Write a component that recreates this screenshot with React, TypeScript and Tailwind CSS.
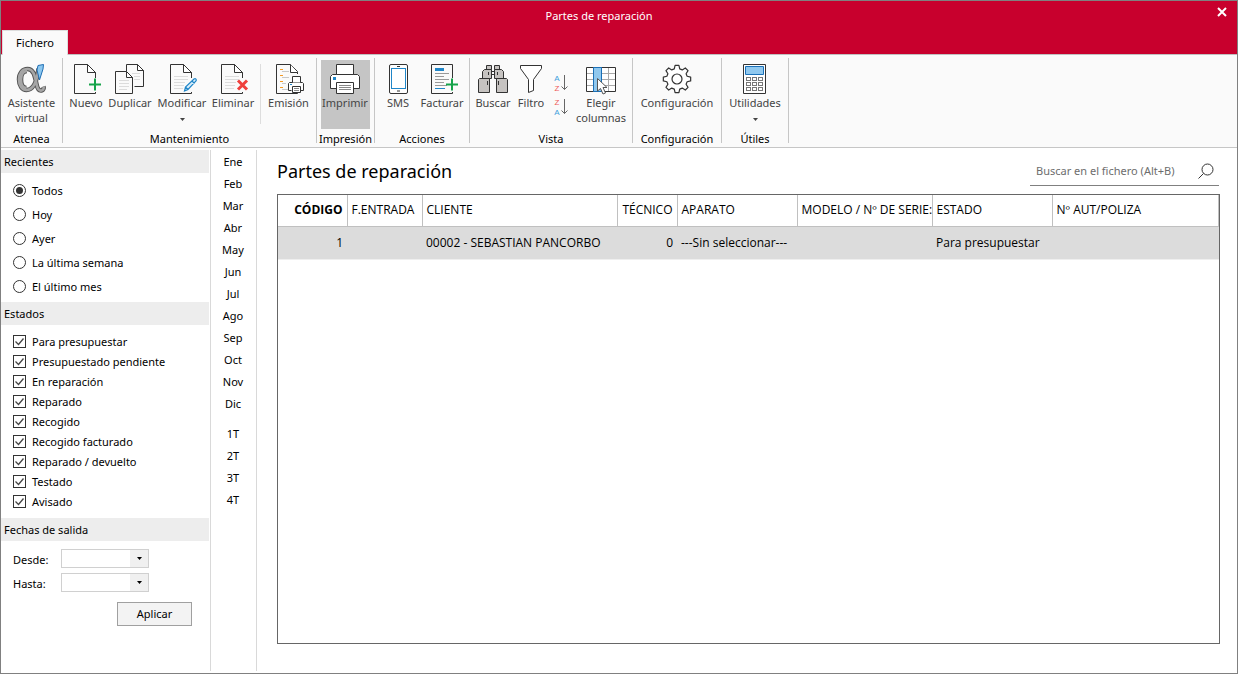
import { useState } from "react";
import type { ReactNode } from "react";

const RECENT = ["Todos", "Hoy", "Ayer", "La última semana", "El último mes"];

const STATES = [
  "Para presupuestar",
  "Presupuestado pendiente",
  "En reparación",
  "Reparado",
  "Recogido",
  "Recogido facturado",
  "Reparado / devuelto",
  "Testado",
  "Avisado",
];

const MONTHS = ["Ene", "Feb", "Mar", "Abr", "May", "Jun", "Jul", "Ago", "Sep", "Oct", "Nov", "Dic"];
const QUARTERS = ["1T", "2T", "3T", "4T"];

const COLUMNS = [
  { label: "CÓDIGO", className: "w-[69px] text-right font-bold" },
  { label: "F.ENTRADA", className: "w-[75px] text-left font-normal" },
  { label: "CLIENTE", className: "w-[195px] text-left font-normal" },
  { label: "TÉCNICO", className: "w-[60px] text-right font-normal" },
  { label: "APARATO", className: "w-[120px] text-left font-normal" },
  { label: "MODELO / Nº DE SERIE:", className: "w-[135px] text-left font-normal" },
  { label: "ESTADO", className: "w-[120px] text-left font-normal" },
  { label: "Nº AUT/POLIZA", className: "text-left font-normal" },
];

const ROWS = [
  ["1", "", "00002 - SEBASTIAN PANCORBO", "0", "---Sin seleccionar---", "", "Para presupuestar", ""],
];

function Icon({ children }: { children: ReactNode }) {
  return (
    <svg className="w-8 h-8 shrink-0" viewBox="0 0 32 32" fill="none" stroke="#333" aria-hidden="true">
      {children}
    </svg>
  );
}

function PageOutline() {
  return (
    <>
      <path d="M25.5 15V9.5L17.5 1.5H4.5V30.5H25.5V29" fill="none" />
      <path d="M17.5 1.5V9.5H25.5Z" fill="#fff" />
    </>
  );
}

function PageLines() {
  return <path stroke="#dcdcdc" d="M8 13.5H22M8 16.5H22M8 19.5H19M8 22.5H18M8 25.5H17" />;
}

function AlphaIcon() {
  const alpha =
    "M22.5 5.5C21 18 17 27 10.5 27C6 27 3 22.500 3 16.500C3 10 6.500 6 11.500 6C18 6 19 14 20.500 21C21.500 26 23 28 25.500 27.500C27.500 27 28 25 27.500 23.500";
  return (
    <Icon>
      <path d={alpha} stroke="#555" strokeWidth="4.500" />
      <path d="M5 16.500C5 11 7.500 8 11 8M5 16.500C5 22 7.500 25 10.500 25" stroke="#555" strokeWidth="4.500" />
      <path d={alpha} stroke="#a6a6a6" strokeWidth="2.600" />
      <path d="M5 16.500C5 11 7.500 8 11 8M5 16.500C5 22 7.500 25 10.500 25" stroke="#a6a6a6" strokeWidth="2.600" />
      <path d="M22 2.500L27.500 1.500L27 6L23.500 17L21 7Z" fill="#8cc8f0" stroke="#1f6eb4" />
    </Icon>
  );
}

function NewIcon() {
  return (
    <Icon>
      <PageOutline />
      <path d="M25 15.500V27.500M19 21.500H31" stroke="#16a34a" strokeWidth="2" />
    </Icon>
  );
}

function DuplicateIcon() {
  return (
    <Icon>
      <path d="M12.500 8V1.500H23.500L29.500 7.500V23.500H20.500" />
      <path d="M23.500 1.500V7.500H29.500Z" fill="#fff" />
      <path d="M18 10.500H26M20 13.500H26M20 16.500H26" stroke="#dcdcdc" />
      <path d="M1.500 8.500H12.500L18.500 14.500V30.500H1.500Z" />
      <path d="M12.500 8.500V14.500H18.500Z" fill="#fff" />
      <path d="M5 17.500H15M5 20.500H15M5 23.500H15M5 26.500H13" stroke="#dcdcdc" />
    </Icon>
  );
}

function EditIcon() {
  return (
    <Icon>
      <PageOutline />
      <PageLines />
      <path d="M18.500 28L19.500 24L28 16C29.500 15 31 16.500 30 18L22 26.500L18.500 28ZM19.500 24L22 26.500M26 18L28.500 20.500" fill="#d9effc" stroke="#2086c8" strokeWidth="1.200" />
    </Icon>
  );
}

function DeleteIcon() {
  return (
    <Icon>
      <PageOutline />
      <PageLines />
      <path d="M21 17.500L30 26.500M30 17.500L21 26.500" stroke="#ef3f3c" strokeWidth="3" />
    </Icon>
  );
}

function IssueIcon() {
  return (
    <Icon>
      <path d="M24.500 11V8.500L17.500 1.500H3.500V30.500H24.500V29" />
      <path d="M17.500 1.500V9.500H24.500" fill="#fff" />
      <path d="M7 6.500H10M7 12.500H10M7 18.500H10M7 24.500H10" stroke="#f59a23" />
      <path d="M9 8.500H16M9 14.500H16M9 20.500H13M9 26.500H15" stroke="#c8c8c8" />
      <path d="M18.500 27.500H15.500V20.500L16.500 19.500H29.500L30.500 20.500V27.500H27.500" fill="#fff" />
      <path d="M19.500 19.500V13.500H27.500V19.500" fill="#fff" />
      <path d="M19.500 23.500H27.500V29.500H19.500Z" fill="#fff" />
      <path d="M21 25.500H26M21 27.500H26" stroke="#888" />
      <path d="M17 21.500H19" stroke="#2086c8" />
    </Icon>
  );
}

function PrinterIcon() {
  return (
    <Icon>
      <path d="M1.500 25.500V13.500L3.500 11.500H28.500L30.500 13.500V25.500Z" fill="#fff" />
      <path d="M7.500 11.500V1.500H24.500V11.500Z" fill="#fff" />
      <path d="M7.500 19.500H24.500V30.500H7.500Z" fill="#fff" />
      <path d="M10 22.500H22M10 24.500H22M10 26.500H22" stroke="#888" />
      <path d="M4 14H7V17H4Z" fill="#2086c8" stroke="none" />
    </Icon>
  );
}

function PhoneIcon() {
  return (
    <Icon>
      <rect x="7.500" y="1.500" width="18" height="29" rx="1.500" fill="#fff" />
      <rect x="9.500" y="5.500" width="14" height="20" stroke="#2086c8" />
      <path d="M15 3.500H18M15 28H18" />
    </Icon>
  );
}

function InvoiceIcon() {
  return (
    <Icon>
      <path d="M26.500 15V1.500H5.500V30.500H26.500V29" />
      <path d="M9 5H18V8H9Z" fill="#2086c8" stroke="none" />
      <path d="M9 10.500H23M9 13.500H18M9 16.500H23M9 19.500H18M9 22.500H21" stroke="#999" />
      <path d="M9 25.500H19" stroke="#2086c8" />
      <path d="M26 15.500V27.500M20 21.500H32" stroke="#16a34a" strokeWidth="2" />
    </Icon>
  );
}

function BinocularsIcon() {
  return (
    <Icon>
      <g fill="#c6c3c1">
        <path d="M9.500 2.500H14.500V6.500H9.500ZM17.500 2.500H22.500V6.500H17.500Z" />
        <path d="M7.500 6.500H14.500V15.500H5.500V8.500ZM17.500 6.500H24.500L26.500 8.500V15.500H17.500Z" />
        <path d="M2.500 15.500H12.500V29.500H1.500V16.500ZM19.500 15.500H29.500L30.500 16.500V29.500H19.500Z" />
      </g>
      <path d="M14.500 8.500H17.500M14.500 11.500H17.500M11.500 9V12M20.500 9V12M10.500 18V22M21.500 18V22" />
    </Icon>
  );
}

function FunnelIcon() {
  return (
    <Icon>
      <path d="M5.500 2.500H26.500V5.500L18.500 16.500V27.500L13.500 29.500V16.500L5.500 5.500Z" fill="#fff" />
    </Icon>
  );
}

function SortIcon({ descending = false }: { descending?: boolean }) {
  const blue = { fill: "#3fa0dc", text: "A" };
  const red = { fill: "#ee5a5a", text: "Z" };
  const [top, bottom] = descending ? [red, blue] : [blue, red];
  return (
    <svg className="w-4 h-5" viewBox="0 0 16 20" fill="none" aria-hidden="true">
      <g fontFamily="Liberation Sans, sans-serif" fontSize="8" textAnchor="middle">
        <text x="4" y="8" fill={top.fill}>{top.text}</text>
        <text x="4" y="18" fill={bottom.fill}>{bottom.text}</text>
      </g>
      <path d="M11.500 2V16.500M8.500 13.500L11.500 16.500L14.500 13.500" stroke="#666" />
    </svg>
  );
}

function ColumnsIcon() {
  return (
    <Icon>
      <path d="M1.500 4.500H30.500V28.500H1.500Z" fill="#fff" />
      <path d="M2 10.500H30M2 16.500H30M2 22.500H30M23.500 5V28" stroke="#aaa" />
      <path d="M8.500 4.500H16.500V28.500H8.500Z" fill="#90c8ee" stroke="#1a70b8" />
      <path d="M12.500 15.500V28L15.500 25.500L18 31L20.500 30L18 24.500H22Z" fill="#fff" stroke="#555" />
    </Icon>
  );
}

// Eight trapezoid teeth around the centre of the 32px box
function gearPoints() {
  const points: string[] = [];
  for (let i = 0; i < 8; i++) {
    const corners = [[-15, 10.5], [-8, 13.8], [8, 13.8], [15, 10.5]];
    for (const [offset, radius] of corners) {
      const angle = ((i * 45 + offset) * Math.PI) / 180;
      points.push(`${16 + radius * Math.cos(angle)},${16 + radius * Math.sin(angle)}`);
    }
  }
  return points.join(" ");
}

function GearIcon() {
  return (
    <Icon>
      <polygon points={gearPoints()} fill="#fff" strokeWidth="1.200" strokeLinejoin="round" />
      <circle cx="16" cy="16" r="5" strokeWidth="1.200" />
    </Icon>
  );
}

function CalculatorIcon() {
  return (
    <Icon>
      <path d="M4.500 1.500H26.500V30.500H4.500Z" fill="#fff" />
      <path d="M6.500 3.500H24.500V11.500H6.500Z" fill="#90c8ee" stroke="#1a70b8" />
      {[14.5, 19.5, 24.5].map((y) =>
        [7.5, 13.5, 19.5].map((x) => <rect key={`${x}-${y}`} x={x} y={y} width="4" height="3" stroke="#777" />)
      )}
    </Icon>
  );
}

function Caret() {
  return (
    <svg className="w-[7px] h-1" viewBox="0 0 7 4" aria-hidden="true">
      <path d="M1 0H6L3.500 3Z" fill="currentColor" />
    </svg>
  );
}

type RibbonButtonProps = {
  icon: ReactNode;
  label: string;
  className: string;
  menu?: boolean;
};

function RibbonButton({ icon, label, className, menu }: RibbonButtonProps) {
  return (
    <button className={`flex flex-col items-center h-[69px] pt-[3px] text-[#444] hover:bg-gray-200 ${className}`}>
      {icon}
      <span className="leading-[15px]">{label}</span>
      {menu && <span className="pt-2"><Caret /></span>}
    </button>
  );
}

function RibbonGroup({ title, className, children }: { title: string; className: string; children: ReactNode }) {
  return (
    <section className={`flex flex-col justify-between shrink-0 border-r border-[#c6c6c6] ${className}`}>
      <div className="flex justify-center pt-0.5">{children}</div>
      <h2 className="text-center leading-4 -mb-1 whitespace-nowrap">{title}</h2>
    </section>
  );
}

function PanelTitle({ children }: { children: ReactNode }) {
  return <h2 className="h-[23px] pl-[3px] bg-[#ededed] leading-6">{children}</h2>;
}

function DateSelect({ id, label }: { id: string; label: string }) {
  return (
    <div className="flex items-center h-[19px]">
      <label htmlFor={id} className="w-12 pt-[3px]">{label}</label>
      <div className="relative">
        <select id={id} className="block appearance-none w-[88px] h-[19px] border border-[#d0d0d0] bg-white">
          <option value=""></option>
        </select>
        <span className="absolute right-px top-px bottom-px w-[18px] bg-[#f0f0f0] flex items-center justify-center pointer-events-none">
          <Caret />
        </span>
      </div>
    </div>
  );
}

function Sidebar() {
  const [recent, setRecent] = useState("Todos");
  return (
    <aside className="w-[210px] shrink-0 pr-px border-r border-[#d9d9d9]">
      <PanelTitle>Recientes</PanelTitle>
      <div className="pl-3 pt-1.5 pb-[3px]">
        {RECENT.map((item) => (
          <label key={item} className="flex items-center gap-1.5 h-6">
            <input
              type="radio"
              name="recent"
              checked={recent === item}
              onChange={() => setRecent(item)}
              className="appearance-none w-[13px] h-[13px] mb-px p-0.5 rounded-full border border-[#333] bg-clip-content checked:bg-[#333]"
            />
            {item}
          </label>
        ))}
      </div>
      <PanelTitle>Estados</PanelTitle>
      <div className="pl-3 pt-[7px] pb-1.5">
        {STATES.map((item) => (
          <label key={item} className="relative flex items-center gap-1.5 h-5">
            <input type="checkbox" defaultChecked className="peer appearance-none w-[13px] h-[13px] mb-px border border-[#333] bg-white" />
            <svg className="absolute left-0 w-[13px] h-[13px] mb-px opacity-0 peer-checked:opacity-100 pointer-events-none" viewBox="0 0 13 13" fill="none">
              <path d="M2.500 6.500L5.500 9.500L10.500 3.500" stroke="#444" strokeWidth="1.300" />
            </svg>
            {item}
          </label>
        ))}
      </div>
      <PanelTitle>Fechas de salida</PanelTitle>
      <div className="flex flex-col gap-[5px] pl-3 pt-2">
        <DateSelect id="desde" label="Desde:" />
        <DateSelect id="hasta" label="Hasta:" />
      </div>
      <div className="flex justify-end pr-[17px] pt-2.5">
        <button className="w-[75px] h-6 border border-[#a0a0a0] bg-[#f3f3f3] hover:bg-gray-200">Aplicar</button>
      </div>
    </aside>
  );
}

function Periods() {
  return (
    <nav className="w-[46px] shrink-0 flex flex-col pt-px pr-px border-r border-[#d9d9d9]">
      {MONTHS.map((month) => (
        <button key={month} className="h-[22px] hover:bg-gray-200">{month}</button>
      ))}
      <div className="flex flex-col pt-2">
        {QUARTERS.map((quarter) => (
          <button key={quarter} className="h-[22px] hover:bg-gray-200">{quarter}</button>
        ))}
      </div>
    </nav>
  );
}

function RepairTable() {
  return (
    <div className="flex-1 border border-[#666]">
      <table className="w-full table-fixed border-collapse text-xs font-['Open_Sans',sans-serif]">
        <thead>
          <tr className="h-[31px]">
            {COLUMNS.map((column) => (
              <th key={column.label} className={`px-1 border-r border-b border-[#c0c0c0] whitespace-nowrap ${column.className}`}>
                {column.label}
              </th>
            ))}
          </tr>
        </thead>
        <tbody>
          {ROWS.map((row) => (
            <tr key={row[0]} className="h-[33px] bg-[#dcdcdc] border-b border-[#efefef]">
              {row.map((cell, i) => (
                <td key={i} className={`px-1 whitespace-nowrap ${i === 0 || i === 3 ? "text-right" : ""}`}>{cell}</td>
              ))}
            </tr>
          ))}
        </tbody>
      </table>
    </div>
  );
}

export default function App() {
  return (
    <div className="flex flex-col min-h-screen border border-[#808080] bg-white text-black text-[11px] font-['Noto_Sans',sans-serif]">
      <header className="bg-[#c8002d]">
        <div className="relative flex items-center justify-center h-[29px] text-white">
          <h1 className="pr-10 pt-0.5">Partes de reparación</h1>
          <button aria-label="Cerrar" className="absolute right-2.5 top-1.5">
            <svg className="w-2.5 h-2.5" viewBox="0 0 10 10" stroke="#fff" strokeWidth="2">
              <path d="M1 1L9 9M9 1L1 9" />
            </svg>
          </button>
        </div>
        <div className="flex h-[25px] pl-px border-b border-[#c0c0c0]">
          <button className="relative w-[66px] h-[25px] border border-b-0 border-[#ddd] bg-[#fafafa]">Fichero</button>
        </div>
      </header>

      <div className="flex h-[93px] pt-[3px] pb-1 bg-[#fafafa] border-b border-[#c6c6c6]">
        <RibbonGroup title="Atenea" className="w-[62px]">
          <RibbonButton icon={<AlphaIcon />} label="Asistente virtual" className="w-15" />
        </RibbonGroup>
        <RibbonGroup title="Mantenimiento" className="w-[254px]">
          <RibbonButton icon={<NewIcon />} label="Nuevo" className="w-11" />
          <RibbonButton icon={<DuplicateIcon />} label="Duplicar" className="w-11" />
          <RibbonButton icon={<EditIcon />} label="Modificar" className="w-15" menu />
          <RibbonButton icon={<DeleteIcon />} label="Eliminar" className="w-[42px]" />
          <div className="ml-1.5 mr-px h-15 mt-1 border-r border-[#ddd]" />
          <RibbonButton icon={<IssueIcon />} label="Emisión" className="w-[53px]" />
        </RibbonGroup>
        <RibbonGroup title="Impresión" className="w-[58px]">
          <RibbonButton icon={<PrinterIcon />} label="Imprimir" className="w-[49px] pr-px bg-[#c5c5c5]" />
        </RibbonGroup>
        <RibbonGroup title="Acciones" className="w-[95px]">
          <RibbonButton icon={<PhoneIcon />} label="SMS" className="w-10" />
          <RibbonButton icon={<InvoiceIcon />} label="Facturar" className="w-12" />
        </RibbonGroup>
        <RibbonGroup title="Vista" className="w-[163px]">
          <RibbonButton icon={<BinocularsIcon />} label="Buscar" className="w-10" />
          <RibbonButton icon={<FunnelIcon />} label="Filtro" className="w-9" />
          <div className="flex flex-col gap-1 w-6 pt-[13px] items-center">
            <button aria-label="Orden ascendente"><SortIcon /></button>
            <button aria-label="Orden descendente"><SortIcon descending /></button>
          </div>
          <RibbonButton icon={<ColumnsIcon />} label="Elegir columnas" className="w-14" />
        </RibbonGroup>
        <RibbonGroup title="Configuración" className="w-[89px]">
          <RibbonButton icon={<GearIcon />} label="Configuración" className="w-20" />
        </RibbonGroup>
        <RibbonGroup title="Útiles" className="w-[67px]">
          <RibbonButton icon={<CalculatorIcon />} label="Utilidades" className="w-15" menu />
        </RibbonGroup>
      </div>

      <div className="flex flex-1 pt-0.5 pb-0.5">
        <Sidebar />
        <Periods />
        <main className="flex flex-1 flex-col min-w-0 pl-5 pr-[17px] pb-[27px]">
          <div className="flex justify-between h-11">
            <h2 className="text-lg leading-[42px]">Partes de reparación</h2>
            <div className="flex items-center w-[189px] h-9 mr-px pt-2 border-b border-[#808080]">
              <input
                type="text"
                aria-label="Buscar en el fichero"
                placeholder="Buscar en el fichero (Alt+B)"
                className="flex-1 min-w-0 pl-1.5 outline-none placeholder:text-[#6d6d6d]"
              />
              <button aria-label="Buscar" className="pr-[5px] pb-0.5">
                <svg className="w-4 h-4" viewBox="0 0 16 16" fill="none" stroke="#333">
                  <circle cx="9.500" cy="6.500" r="5.500" />
                  <path d="M5.500 10.500L0.500 15.500" />
                </svg>
              </button>
            </div>
          </div>
          <RepairTable />
        </main>
      </div>
    </div>
  );
}
